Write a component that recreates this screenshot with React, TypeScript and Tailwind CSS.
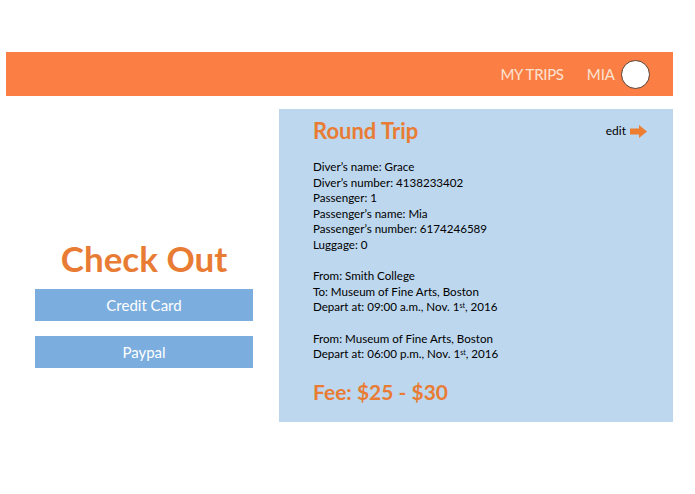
export default function App() {
  const font = { fontFamily: "Lato, 'Open Sans', sans-serif" };

  return (
    <div
      className="w-[695px] h-[494px] bg-white overflow-hidden"
      style={font}
    >
      {/* Header */}
      <div className="mt-[52px] ml-[6px] w-[667px] h-[44px] bg-[#fb7f45] flex items-center justify-end pr-[23px]">
        <span className="text-[15px] text-[#fbe3d3] tracking-[-0.3px]">
          MY TRIPS
        </span>
        <span className="ml-[23px] text-[15px] text-[#fbe3d3]">MIA</span>
        <div className="ml-[6px] w-[29px] h-[29px] rounded-full bg-white border border-[#5a3a2a]" />
      </div>

      <div className="flex mt-[13px]">
        {/* Left column */}
        <div className="ml-[35px] w-[218px] pt-[131px] flex flex-col items-center">
          <h1 className="text-[35px] leading-[36px] font-bold text-[#e97c34]">
            Check Out
          </h1>
          <button className="mt-[13px] w-full h-[32px] bg-[#7badde] text-white text-[15px]">
            Credit Card
          </button>
          <button className="mt-[15px] w-full h-[32px] bg-[#7badde] text-white text-[15px]">
            Paypal
          </button>
        </div>

        {/* Trip panel */}
        <div className="ml-[26px] w-[394px] h-[313px] bg-[#bdd7ee] pl-[34px] pr-[26px] pt-[8px]">
          <div className="flex items-center justify-between">
            <h2 className="text-[22px] leading-[28px] font-bold text-[#e97c34]">
              Round Trip
            </h2>
            <div className="flex items-center gap-[4px] text-[12px] text-black">
              edit
              <svg width="17" height="13" viewBox="0 0 17 13">
                <path d="M0 3.5h9V0l8 6.5-8 6.5V9.5H0z" fill="#ed7d31" />
              </svg>
            </div>
          </div>

          <div className="mt-[14px] text-[11.6px] leading-[15.6px] text-black">
            <p>Diver’s name: Grace</p>
            <p>Diver’s number: 4138233402</p>
            <p>Passenger: 1</p>
            <p>Passenger’s name: Mia</p>
            <p>Passenger’s number: 6174246589</p>
            <p>Luggage: 0</p>
            <p className="mt-[15.6px]">From: Smith College</p>
            <p>To: Museum of Fine Arts, Boston</p>
            <p>
              Depart at: 09:00 a.m., Nov. 1<sup className="text-[7px]">st</sup>, 2016
            </p>
            <p className="mt-[15.6px]">From: Museum of Fine Arts, Boston</p>
            <p>
              Depart at: 06:00 p.m., Nov. 1<sup className="text-[7px]">st</sup>, 2016
            </p>
          </div>

          <p className="mt-[14px] text-[21px] font-bold text-[#e97c34]">
            Fee: $25 - $30
          </p>
        </div>
      </div>
    </div>
  );
}
